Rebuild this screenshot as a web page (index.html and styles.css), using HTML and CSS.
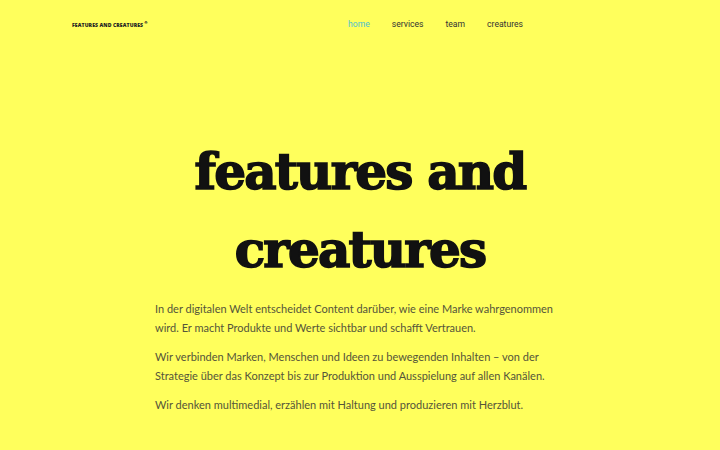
FILE: index.html
```html
<!DOCTYPE html>
<html lang="de">
<head>
<meta charset="utf-8">
<link rel="stylesheet" href="styles.css">
</head>
<body>
<header class="top">
  <div class="logo">FEATURES AND CREATURES<sup>®</sup></div>
  <nav class="nav">
    <a class="active">home</a>
    <a>services</a>
    <a>team</a>
    <a>creatures</a>
  </nav>
</header>
<main class="hero">
  <h1 class="title">features and<br>creatures</h1>
  <div class="copy">
    <p>In der digitalen Welt entscheidet Content darüber, wie eine Marke wahrgenommen wird. Er macht Produkte und Werte sichtbar und schafft Vertrauen.</p>
    <p>Wir verbinden Marken, Menschen und Ideen zu bewegenden Inhalten – von der Strategie über das Konzept bis zur Produktion und Ausspielung auf allen Kanälen.</p>
    <p>Wir denken multimedial, erzählen mit Haltung und produzieren mit Herzblut.</p>
  </div>
</main>
</body>
</html>
```
FILE: styles.css
```css
html, body {
  margin: 0;
  padding: 0;
  background: #ffff5c;
  height: 100%;
  overflow: hidden;
}
body {
  font-family: Lato, "Liberation Sans", sans-serif;
}
.top {
  display: flex;
  align-items: center;
  justify-content: space-between;
  padding: 17px 197px 0 72px;
  height: 14px;
}
.logo {
  font-family: "Open Sans", sans-serif;
  font-weight: 800;
  font-size: 5.1px;
  letter-spacing: 0.1px;
  color: #222;
}
.logo sup {
  font-size: 4px;
  margin-left: 1px;
}
.nav {
  display: flex;
  gap: 22px;
}
.nav a {
  font-family: Roboto, sans-serif;
  font-size: 8.6px;
  color: #333;
}
.nav a.active {
  color: #4fbfcf;
}
.hero {
  width: 410px;
  margin: 0 auto;
  padding-top: 102px;
}
.title {
  margin: 0;
  text-align: center;
  font-family: "DejaVu Serif", serif;
  font-weight: 900;
  font-size: 50px;
  line-height: 78px;
  letter-spacing: -1.8px;
  color: #111;
  -webkit-text-stroke: 1.6px #111;
}
.copy {
  margin-top: 10px;
}
.copy p {
  margin: 0 0 9.5px;
  font-size: 11px;
  line-height: 19.3px;
  color: #55553a;
}
```
